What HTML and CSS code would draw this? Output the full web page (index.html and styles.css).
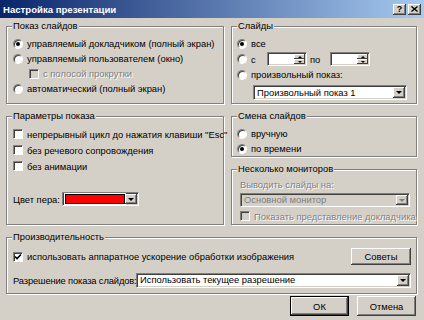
FILE: index.html
```html
<!DOCTYPE html>
<html lang="ru">
<head>
    <meta charset="utf-8">
    <title>Настройка презентации</title>
    <link rel="stylesheet" href="styles.css">
</head>
<body>
<div class="window">
    <div class="titlebar">
        <span class="title">Настройка презентации</span>
        <div class="title-buttons">
            <span class="tbtn">?</span>
            <span class="tbtn">
                <svg width="7" height="6" viewBox="0 0 7 6"><path d="M0.5 0.5 L6.5 5.5 M6.5 0.5 L0.5 5.5" stroke="#000" stroke-width="1.4"/></svg>
            </span>
        </div>
    </div>

    <div class="dialog">
        <div class="cols">
            <div class="group g-show">
                <span class="caption">Показ слайдов</span>
                <div class="opt"><span class="radio on"></span>управляемый докладчиком (полный экран)</div>
                <div class="opt"><span class="radio"></span>управляемый пользователем (окно)</div>
                <div class="opt indent disabled"><span class="check off"></span>с полосой прокрутки</div>
                <div class="opt"><span class="radio"></span>автоматический (полный экран)</div>
            </div>

            <div class="group g-slides">
                <span class="caption">Слайды</span>
                <div class="opt"><span class="radio on"></span>все</div>
                <div class="opt tall">
                    <span class="radio"></span><span class="short">с</span>
                    <span class="field spin"><span class="spin-btns"><span class="sb"><i class="up"></i></span><span class="sb"><i class="down"></i></span></span></span>
                    <span class="po">по</span>
                    <span class="field spin"><span class="spin-btns"><span class="sb"><i class="up"></i></span><span class="sb"><i class="down"></i></span></span></span>
                </div>
                <div class="opt"><span class="radio"></span>произвольный показ:</div>
                <div class="field combo custom-show">
                    <span class="combo-text">Произвольный показ 1</span>
                    <span class="drop"><i class="down"></i></span>
                </div>
            </div>
        </div>

        <div class="cols row-two">
            <div class="group g-params">
                <span class="caption">Параметры показа</span>
                <div class="opt row16"><span class="check"></span>непрерывный цикл до нажатия клавиши "Esc"</div>
                <div class="opt row16"><span class="check"></span>без речевого сопровождения</div>
                <div class="opt row16"><span class="check"></span>без анимации</div>
                <div class="pen-row">
                    <span class="pen-label">Цвет пера:</span>
                    <div class="field combo pen">
                        <span class="swatch"></span>
                        <span class="drop"><i class="down"></i></span>
                    </div>
                </div>
            </div>

            <div class="right-stack">
                <div class="group g-advance">
                    <span class="caption">Смена слайдов</span>
                    <div class="opt"><span class="radio"></span>вручную</div>
                    <div class="opt"><span class="radio on"></span>по времени</div>
                </div>
                <div class="group g-monitors">
                    <span class="caption">Несколько мониторов</span>
                    <div class="dim-label disabled">Выводить слайды на:</div>
                    <div class="field combo off monitor">
                        <span class="combo-text">Основной монитор</span>
                        <span class="drop"><i class="down grey"></i></span>
                    </div>
                    <div class="opt disabled presenter"><span class="check off"></span>Показать представление докладчика</div>
                </div>
            </div>
        </div>

        <div class="group g-perf">
            <span class="caption">Производительность</span>
            <div class="perf-row">
                <div class="opt"><span class="check">
                    <svg width="8" height="8" viewBox="0 0 8 8"><path d="M1 3.5 L3 5.5 L7 1.5" fill="none" stroke="#000" stroke-width="1.6"/></svg>
                </span>использовать аппаратное ускорение обработки изображения</div>
                <span class="button tips">Советы</span>
            </div>
            <div class="res-row">
                <span class="res-label">Разрешение показа слайдов:</span>
                <div class="field combo res">
                    <span class="combo-text">Использовать текущее разрешение</span>
                    <span class="drop"><i class="down"></i></span>
                </div>
            </div>
        </div>

        <div class="actions">
            <span class="button default">ОК</span>
            <span class="button">Отмена</span>
        </div>
    </div>
</div>
</body>
</html>
```

FILE: styles.css
```css
* {
    box-sizing: border-box;
}

body {
    margin: 0;
    background: #D4D0C8;
    font-family: "Liberation Sans", Arial, sans-serif;
    font-size: 9.4px;
    color: #000;
}

.window {
    width: 424px;
    height: 320px;
    overflow: hidden;
}

/* title bar */

.titlebar {
    height: 18px;
    background: linear-gradient(to right, #0A246A, #A6CAF0);
    display: flex;
    align-items: center;
    justify-content: space-between;
    padding: 0 3px 0 3px;
}

.title {
    color: #fff;
    font-weight: bold;
    font-size: 9.6px;
}

.title-buttons {
    display: flex;
    gap: 2px;
}

.tbtn {
    width: 13px;
    height: 11px;
    background: #D4D0C8;
    box-shadow: inset -1px -1px 0 #404040, inset 1px 1px 0 #fff, inset -2px -2px 0 #808080;
    display: flex;
    align-items: center;
    justify-content: center;
    font-weight: bold;
    font-size: 9px;
    line-height: 9px;
}

/* dialog body */

.dialog {
    padding: 8px 7px 0 6px;
}

.cols {
    display: grid;
    grid-template-columns: 218px 186px;
    column-gap: 7px;
}

.row-two {
    margin-top: 12px;
}

.group {
    position: relative;
    border: 1px solid #808080;
    box-shadow: inset 1px 1px 0 #fff, 1px 1px 0 #fff;
}

.caption {
    position: absolute;
    top: -7px;
    left: 5px;
    padding: 0 1px;
    line-height: 12px;
    background: #D4D0C8;
    white-space: nowrap;
}

.opt {
    display: flex;
    align-items: center;
    gap: 4px;
    height: 15px;
    white-space: nowrap;
}

.opt.tall {
    height: 16px;
}

.row16 {
    height: 16px;
}

.indent {
    padding-left: 16px;
}

.disabled {
    color: #808080;
    text-shadow: 1px 1px 0 #fff;
}

/* radio and check boxes */

.radio {
    position: relative;
    flex: none;
    width: 10px;
    height: 10px;
    border-radius: 50%;
    background: #fff;
    border: 1px solid;
    border-color: #808080 #fff #fff #808080;
    box-shadow: inset 1px 1px 0 #404040;
}

.radio.on::after {
    content: "";
    position: absolute;
    left: 2px;
    top: 2px;
    width: 4px;
    height: 4px;
    border-radius: 50%;
    background: #000;
}

.check {
    flex: none;
    width: 10px;
    height: 10px;
    background: #fff;
    border: 1px solid;
    border-color: #808080 #fff #fff #808080;
    box-shadow: inset 1px 1px 0 #404040;
    display: flex;
    align-items: center;
    justify-content: center;
}

.check.off {
    background: #D4D0C8;
}

/* fields */

.field {
    background: #fff;
    border: 1px solid;
    border-color: #808080 #fff #fff #808080;
    box-shadow: inset 1px 1px 0 #404040, inset -1px -1px 0 #D4D0C8;
}

.spin {
    width: 40px;
    height: 14px;
    display: flex;
    justify-content: flex-end;
    padding: 1px;
}

.short {
    width: 12px;
}

.po {
    margin-left: -1px;
    width: 16px;
}

.spin-btns {
    display: flex;
    flex-direction: column;
    width: 11px;
}

.sb {
    flex: 1;
    background: #D4D0C8;
    box-shadow: inset -1px -1px 0 #404040, inset 1px 1px 0 #fff;
    display: flex;
    align-items: center;
    justify-content: center;
}

.combo {
    display: flex;
    align-items: center;
    justify-content: space-between;
    padding: 1px;
    height: 15px;
}

.combo-text {
    padding-left: 2px;
    white-space: nowrap;
    line-height: 12px;
}

.combo.off {
    background: #D4D0C8;
}

.combo.off .combo-text {
    color: #808080;
}

.drop {
    flex: none;
    width: 12px;
    height: 100%;
    background: #D4D0C8;
    box-shadow: inset -1px -1px 0 #404040, inset 1px 1px 0 #fff, inset -2px -2px 0 #808080;
    display: flex;
    align-items: center;
    justify-content: center;
}

i.down {
    width: 0;
    height: 0;
    border-left: 3px solid transparent;
    border-right: 3px solid transparent;
    border-top: 3px solid #000;
}

i.down.grey {
    border-top-color: #808080;
}

i.up {
    width: 0;
    height: 0;
    border-left: 2px solid transparent;
    border-right: 2px solid transparent;
    border-bottom: 2px solid #000;
}

.sb i.down {
    border-left-width: 2px;
    border-right-width: 2px;
    border-top-width: 2px;
}

/* boxes */

.g-show {
    height: 78px;
    padding: 9px 0 0 6px;
}

.g-slides {
    height: 78px;
    padding: 9px 0 0 5px;
}

.custom-show {
    margin: 3px 0 0 16px;
    width: 154px;
}

.g-params {
    height: 109px;
    padding: 9px 0 0 6px;
}

.pen-row {
    display: flex;
    align-items: center;
    margin-top: 17px;
    height: 16px;
}

.pen-label {
    width: 49px;
    white-space: nowrap;
}

.pen {
    width: 77px;
    height: 14px;
}

.swatch {
    width: 60px;
    height: 100%;
    margin-left: 1px;
    background: #FF0000;
    border: 1px solid #000;
    outline: 1px solid #fff;
}

.right-stack {
    display: flex;
    flex-direction: column;
    gap: 12px;
}

.g-advance {
    height: 41px;
    padding: 9px 0 0 5px;
}

.g-monitors {
    height: 56px;
    padding: 8px 0 0 8px;
}

.dim-label {
    height: 14px;
    line-height: 14px;
    white-space: nowrap;
}

.monitor {
    width: 170px;
    height: 14px;
    margin-top: 1px;
}

.presenter {
    margin-top: 2px;
    height: 14px;
}

.g-perf {
    margin-top: 12px;
    height: 57px;
    padding: 9px 5px 0 6px;
}

.perf-row {
    display: flex;
    align-items: center;
    justify-content: space-between;
    height: 19px;
}

.res-row {
    display: flex;
    align-items: center;
    margin-top: 6px;
    height: 16px;
}

.res-label {
    width: 123px;
    flex: none;
    white-space: nowrap;
    letter-spacing: -0.15px;
}

.res {
    flex: 1;
    height: 15px;
}

/* push buttons */

.button {
    display: flex;
    align-items: center;
    justify-content: center;
    background: #D4D0C8;
    box-shadow: inset -1px -1px 0 #404040, inset 1px 1px 0 #fff, inset -2px -2px 0 #808080;
}

.tips {
    width: 60px;
    height: 17px;
}

.actions {
    display: flex;
    justify-content: flex-end;
    gap: 8px;
    margin-top: 2px;
    padding-right: 1px;
}

.actions .button {
    width: 59px;
    height: 20px;
}

.button.default {
    border: 1px solid #000;
}
```
